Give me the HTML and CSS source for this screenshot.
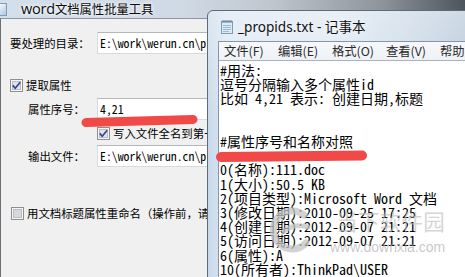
FILE: index.html
```html
<!DOCTYPE html>
<html lang="zh-CN">
<head>
<meta charset="utf-8">
<title>word文档属性批量工具</title>
<link rel="stylesheet" href="styles.css">
</head>
<body>
<div class="main">
  <div class="titlebar">
    <span class="appicon"></span>
    <span class="title"><span class="t-lat">word</span>文档属性批量工具</span>
  </div>
  <div class="client">
    <div class="row r1">
      <span class="lbl">要处理的目录：</span>
      <div class="input">E:\work\werun.cn\propids</div>
    </div>
    <div class="chk c1">
      <svg class="box" width="13" height="13" viewBox="0 0 13 13"><rect x="0.5" y="0.5" width="12" height="12" fill="#f6f6f6" stroke="#8e8f8f"/><rect x="2.5" y="2.5" width="8" height="8" fill="#dfe3ea" stroke="#b7bdc6"/><path d="M2.8 6.4 L5.2 9.2 L10.2 3.2" fill="none" stroke="#33468a" stroke-width="1.7"/></svg>
      <span>提取属性</span>
    </div>
    <div class="row r2 indent">
      <span class="lbl">属性序号：</span>
      <div class="input">4,21</div>
    </div>
    <div class="chk c2">
      <svg class="box" width="13" height="13" viewBox="0 0 13 13"><rect x="0.5" y="0.5" width="12" height="12" fill="#f6f6f6" stroke="#8e8f8f"/><rect x="2.5" y="2.5" width="8" height="8" fill="#dfe3ea" stroke="#b7bdc6"/><path d="M2.8 6.4 L5.2 9.2 L10.2 3.2" fill="none" stroke="#33468a" stroke-width="1.7"/></svg>
      <span>写入文件全名到第一个属性</span>
    </div>
    <div class="row r3 indent">
      <span class="lbl">输出文件：</span>
      <div class="input">E:\work\werun.cn\propids.txt</div>
    </div>
    <div class="chk c3">
      <svg class="box" width="13" height="13" viewBox="0 0 13 13"><rect x="0.5" y="0.5" width="12" height="12" fill="#f6f6f6" stroke="#8e8f8f"/><rect x="2.5" y="2.5" width="8" height="8" fill="#d6d8db" stroke="#b9bcc0"/></svg>
      <span>用文档标题属性重命名（操作前，请备份文档）</span>
    </div>
  </div>
</div>

<div class="notepad">
  <div class="np-title">
    <svg class="np-icon" width="12" height="15" viewBox="0 0 12 15">
      <rect x="0.5" y="2.5" width="11" height="12" fill="#d9ebf7" stroke="#7d9bb4"/>
      <path d="M2 6.5h8M2 8.5h8M2 10.5h8M2 12.5h6" stroke="#9cb9d0" stroke-width="1"/>
      <path d="M2 1v3M4 1v3M6 1v3M8 1v3M10 1v3" stroke="#6a7f92" stroke-width="1"/>
    </svg>
    <span class="np-name">_propids.txt - 记事本</span>
  </div>
  <div class="np-client">
    <div class="menubar">
      <span class="mi">文件(F)</span>
      <span class="mi">编辑(E)</span>
      <span class="mi">格式(O)</span>
      <span class="mi">查看(V)</span>
      <span class="mi">帮助(H)</span>
    </div>
    <div class="edit">#用法:
逗号分隔输入多个属性id
比如 4,21 表示: 创建日期,标题


#属性序号和名称对照

0(名称):111.doc
1(大小):50.5 KB
2(项目类型):Microsoft Word 文档
3(修改日期):2010-09-25 17:25
4(创建日期):2012-09-07 21:21
5(访问日期):2012-09-07 21:21
6(属性):A
10(所有者):ThinkPad\USER
11(标题):</div>
  </div>
</div>

<div class="watermark">
  <svg class="wm-logo" width="48" height="50" viewBox="0 0 48 50">
    <path d="M36 10 A19 19 0 1 0 38 38" fill="none" stroke="#c4c4c4" stroke-width="7" stroke-linecap="round"/>
    <path d="M16 26 Q26 18 40 22" fill="none" stroke="#c4c4c4" stroke-width="5" stroke-linecap="round"/>
  </svg>
  <div class="wm-text">
    <span class="wm-cn">当下软件园</span>
    <span class="wm-url">www.downxia.com</span>
  </div>
</div>

<svg class="marks" width="465" height="277" viewBox="0 0 465 277">
  <line x1="86" y1="122.5" x2="193" y2="119.5" stroke="#f14848" stroke-width="9" stroke-linecap="round"/>
  <line x1="221" y1="157" x2="362" y2="155.5" stroke="#f14848" stroke-width="10" stroke-linecap="round"/>
</svg>
</body>
</html>
```

FILE: styles.css
```css
* { box-sizing: border-box; margin: 0; padding: 0; }
html, body { width: 465px; height: 277px; overflow: hidden; }
body {
  position: relative;
  background: #f0f0f0;
  font-family: "Noto Sans CJK SC", sans-serif;
  color: #000;
}

/* ---------- main tool window ---------- */
.main {
  width: 465px;
  height: 277px;
  display: flex;
  flex-direction: column;
}
.titlebar {
  height: 18px;
  flex: none;
  display: flex;
  align-items: center;
  background: linear-gradient(90deg, #d3dfeb 0%, #cfd9e4 40%, #c0c7cf 58%, #8d949c 82%, #4e545c 100%);
  overflow: hidden;
}
.appicon {
  width: 10px;
  height: 13px;
  margin-left: -3px;
  background: linear-gradient(135deg, #ffffff, #a9c6e2);
  border: 1px solid #7f9cb8;
}
.title {
  margin-left: 14px;
  font-size: 12.3px;
  line-height: 16px;
  color: #0a0a0a;
  text-shadow: 0 0 5px #fff, 0 0 3px #fff;
  white-space: nowrap;
}
.t-lat {
  font-family: "Open Sans", "Noto Sans", sans-serif;
  font-size: 14.5px;
  letter-spacing: -0.2px;
}
.client {
  flex: 1;
  background: #f0f0f0;
  border-left: 1px solid #6c7178;
  border-top: 1px solid #8c97a3;
  padding-left: 9px;
  display: flex;
  flex-direction: column;
  align-items: flex-start;
}
.row {
  display: flex;
  align-items: center;
  height: 22px;
}
.lbl {
  width: 87px;
  font-size: 11.4px;
  line-height: 14px;
  white-space: nowrap;
}
.indent { padding-left: 18px; }
.indent .lbl { width: 69px; }
.input {
  width: 300px;
  height: 22px;
  background: #fff;
  border: 1px solid #d6dbe1;
  border-top-color: #b3b8bf;
  padding-left: 2px;
  font-family: "Noto Sans Mono CJK SC", "Liberation Mono", monospace;
  font-size: 11.8px;
  line-height: 20px;
  white-space: nowrap;
  overflow: hidden;
}
.r1 { margin-top: 13px; }
.r2 { margin-top: 6px; }
.r3 { margin-top: 5px; }
.chk {
  display: flex;
  align-items: center;
  height: 13px;
  font-size: 11.4px;
  line-height: 13px;
  white-space: nowrap;
}
.chk .box { flex: none; margin-right: 3px; }
.c1 { margin-top: 25px; }
.c2 { margin-top: 7px; margin-left: 87px; }
.c3 { margin-top: 40px; margin-left: 1px; }

/* ---------- notepad window ---------- */
.notepad {
  position: absolute;
  left: 207px;
  top: 10px;
  width: 290px;
  height: 290px;
  border: 1px solid #5c6a79;
  border-radius: 6px 6px 0 0;
  background:
    linear-gradient(180deg, rgba(255,255,255,0.35) 0%, rgba(255,255,255,0) 40%),
    linear-gradient(90deg, #c8d9ea 0%, #dbe6f1 6%, #dde7f2 45%, #c9d7e6 70%, #a9bccf 100%);
  padding-left: 10px;
  display: flex;
  flex-direction: column;
}
.np-title {
  height: 30px;
  flex: none;
  display: flex;
  align-items: center;
}
.np-icon { margin-left: 3px; flex: none; }
.np-name {
  margin-left: 5px;
  font-family: "Noto Sans", "Noto Sans CJK SC", sans-serif;
  font-size: 13.6px;
  color: #111;
  white-space: nowrap;
  text-shadow: 0 0 6px #fff;
}
.np-client {
  flex: 1;
  border-left: 1px solid #8596aa;
  border-top: 1px solid #8596aa;
  background: #fff;
  display: flex;
  flex-direction: column;
}
.menubar {
  height: 18px;
  flex: none;
  display: flex;
  align-items: center;
  padding-left: 5px;
  background: linear-gradient(180deg, #f6f8fb 0%, #eef2f7 100%);
}
.mi {
  width: 54px;
  font-size: 12.3px;
  line-height: 16px;
  color: #2b2b2b;
  white-space: nowrap;
}
.edit {
  flex: 1;
  border-top: 1px solid #a9b3be;
  padding: 2px 0 0 1px;
  font-family: "Noto Sans Mono CJK SC", "Noto Sans CJK SC", monospace;
  font-size: 14px;
  line-height: 14.2px;
  white-space: pre;
  color: #000;
}

/* ---------- overlays ---------- */
.watermark {
  position: absolute;
  left: 268px;
  top: 205px;
  display: flex;
  align-items: center;
  opacity: 0.75;
  pointer-events: none;
}
.wm-logo { flex: none; }
.wm-text {
  display: flex;
  flex-direction: column;
  align-items: flex-end;
  margin-left: 14px;
  margin-top: 4px;
}
.wm-cn {
  font-family: "Noto Sans CJK SC", sans-serif;
  font-size: 21.5px;
  line-height: 24px;
  color: rgba(190,190,190,0.85);
  letter-spacing: 0.3px;
}
.wm-url {
  font-family: "Liberation Sans", sans-serif;
  font-size: 14px;
  line-height: 16px;
  margin-top: 6px;
  color: rgba(175,175,175,0.9);
}
.marks {
  position: absolute;
  left: 0;
  top: 0;
  pointer-events: none;
}
```
